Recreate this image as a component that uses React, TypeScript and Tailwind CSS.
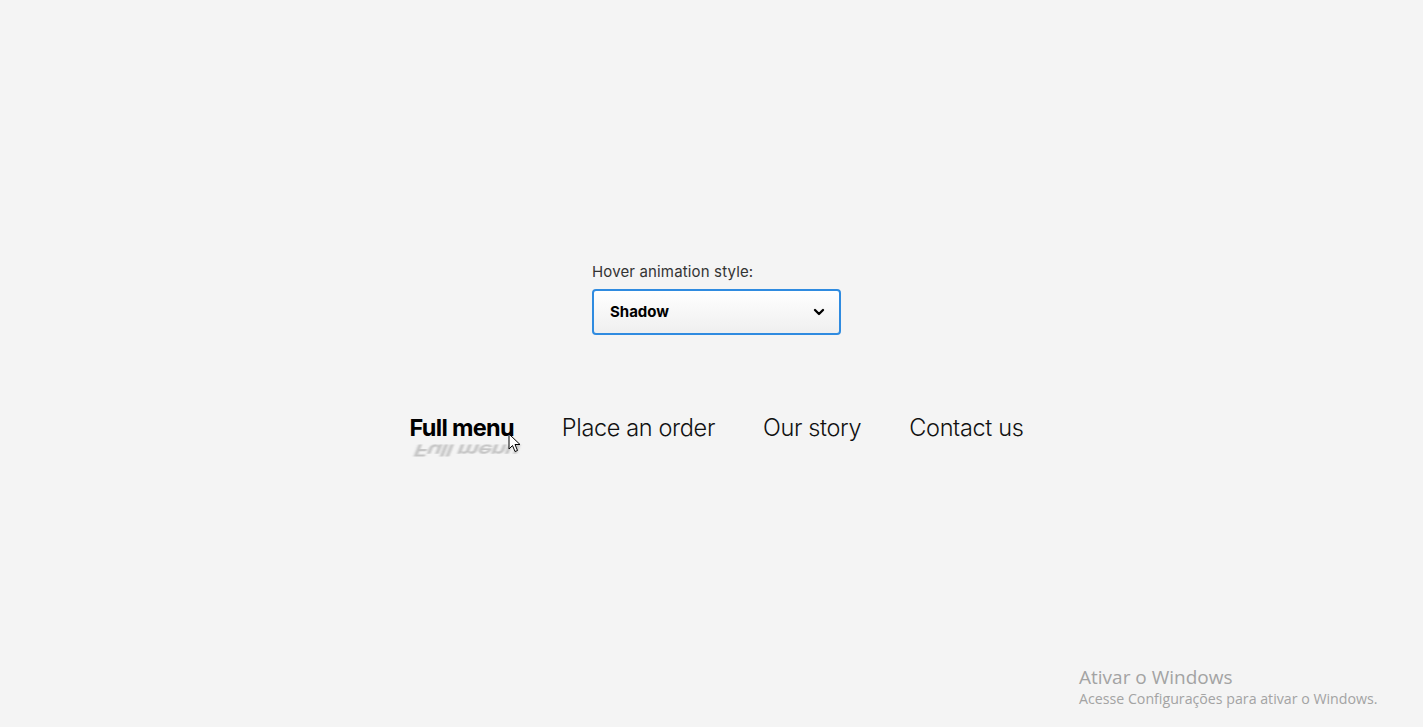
import { ChevronDown } from 'lucide-react';

const font = { fontFamily: 'Inter, "Liberation Sans", sans-serif' };

export default function App() {
  const links = ['Place an order', 'Our story', 'Contact us'];

  return (
    <div className="relative min-h-[727px] w-full bg-[#f4f4f4] text-[#111]" style={font}>
      <div className="flex flex-col items-center pt-[262px] pl-[10px]">
        {/* Style picker */}
        <div className="flex w-[249px] flex-col">
          <label className="text-[15px] leading-5 text-[#333] tracking-[0.01em]">Hover animation style:</label>
          <div className="mt-[7px] flex h-[46px] items-center justify-between rounded-[4px] border-2 border-[#2f8be0] bg-gradient-to-b from-white to-[#efefef] pl-4 pr-[12px]">
            <span className="text-[15px] font-bold text-black">Shadow</span>
            <ChevronDown className="h-4 w-4 text-black" strokeWidth={3.5} />
          </div>
        </div>

        {/* Nav */}
        <nav className="mt-[78px] flex items-center gap-[48px] text-[23.5px] leading-[30px]">
          <a className="relative font-bold text-black tracking-[-0.03em]">
            Full menu
            <span
              aria-hidden
              className="pointer-events-none absolute left-0 top-0 select-none whitespace-nowrap text-[#c4c4c4] blur-[0.8px] origin-[50%_26px] [transform:translate(8px,3px)_scaleY(-0.7)_skewX(16deg)]"
            >
              Full menu
            </span>
            {/* mouse cursor */}
            <svg className="absolute left-[98px] top-[20px]" width="13" height="20" viewBox="0 0 13 20">
              <path d="M1 1 L1 16 L4.5 12.5 L7 18.5 L9.5 17.5 L7 11.5 L12 11.5 Z" fill="white" stroke="black" strokeWidth="1" strokeLinejoin="round" />
            </svg>
          </a>
          {links.map((l) => (
            <a key={l} className="font-light text-[#111] tracking-[-0.015em]">
              {l}
            </a>
          ))}
        </nav>
      </div>

      {/* Windows watermark */}
      <div className="absolute left-[1079px] top-[665px] text-[#a3a3a3]" style={{ fontFamily: '"Open Sans", "Noto Sans", sans-serif' }}>
        <div className="text-[19px] leading-6">Ativar o Windows</div>
        <div className="text-[14.2px] leading-5">Acesse Configurações para ativar o Windows.</div>
      </div>
    </div>
  );
}
